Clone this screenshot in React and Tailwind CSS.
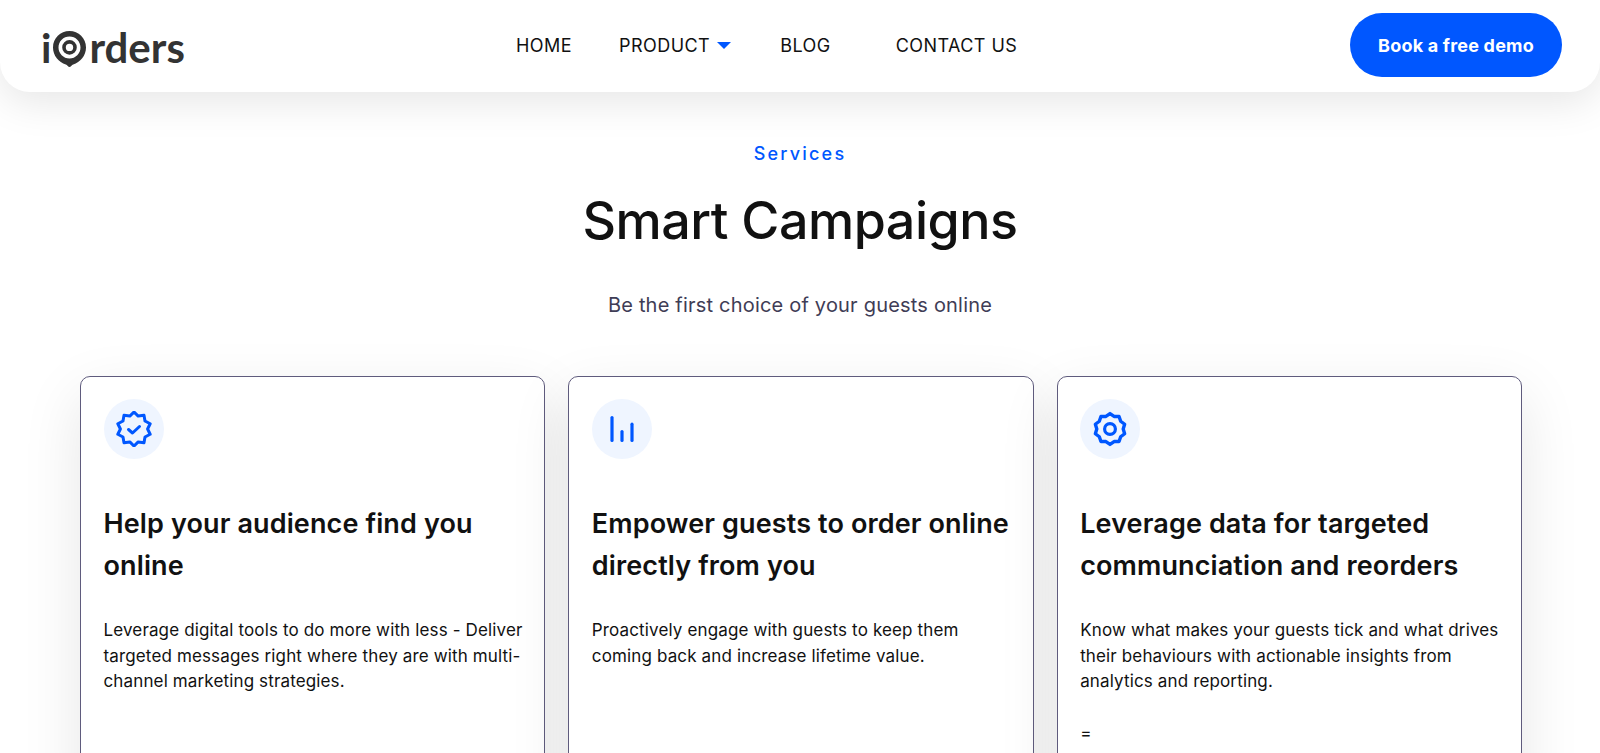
import React from "react";

const cards = [
  {
    icon: "badge",
    title: "Help your audience find you online",
    body: "Leverage digital tools to do more with less - Deliver targeted messages right where they are with multi-channel marketing strategies.",
  },
  {
    icon: "bars",
    title: "Empower guests to order online directly from you",
    body: "Proactively engage with guests to keep them coming back and increase lifetime value.",
  },
  {
    icon: "gear",
    title: "Leverage data for targeted communciation and reorders",
    body: "Know what makes your guests tick and what drives their behaviours with actionable insights from analytics and reporting.",
    extra: "=",
  },
];

// scalloped outline used by the badge and the gear
const ringPath = (points, outer, inner) => {
  let d = "";
  for (let i = 0; i < points * 2; i++) {
    const r = i % 2 === 0 ? outer : inner;
    const a = (Math.PI * i) / points - Math.PI / 2;
    d += `${i === 0 ? "M" : "L"}${(18 + r * Math.cos(a)).toFixed(2)} ${(18 + r * Math.sin(a)).toFixed(2)}`;
  }
  return d + "Z";
};

const BadgeIcon = () => (
  <svg width="36" height="36" viewBox="0 0 36 36" fill="none" stroke="#0057ff" strokeWidth="3" strokeLinejoin="round" strokeLinecap="round">
    <path d={ringPath(10, 17, 13.6)} />
    <path d="M12.500 18.500l4 3.500 7-6.500" />
  </svg>
);

const BarsIcon = () => (
  <svg width="36" height="36" viewBox="0 0 36 36" fill="none" stroke="#0057ff" strokeWidth="3.2" strokeLinecap="round">
    <path d="M8 6.500V29.500" />
    <path d="M18 20.500V29.500" />
    <path d="M28 13.200V29.500" />
  </svg>
);

const GearIcon = () => (
  <svg width="36" height="36" viewBox="0 0 36 36" fill="none" stroke="#0057ff" strokeWidth="3.2" strokeLinejoin="round">
    <path d={ringPath(10, 15.4, 13.2)} strokeWidth="3.400" />
    <circle cx="18" cy="18" r="5.400" />
  </svg>
);

const icons = { badge: BadgeIcon, bars: BarsIcon, gear: GearIcon };

const LogoPin = () => (
  <svg width="33" height="36" viewBox="0 0 33 36" className="shrink-0">
    <path
      fillRule="evenodd"
      fill="#333333"
      d="M16.500 0C7.400 0 0 7.300 0 16.400c0 8.200 5.800 14.800 12.800 17.100 1.500.5 2.500 2.500 3.700 2.500s2.200-2 3.700-2.500C27.200 31.200 33 24.600 33 16.400 33 7.300 25.600 0 16.500 0zm0 5.500c6.100 0 11 4.900 11 10.900s-4.900 11-11 11-11-5-11-11 4.900-10.900 11-10.900z"
    />
    <circle cx="16.500" cy="16.400" r="5.500" fill="none" stroke="#333333" strokeWidth="3.600" />
  </svg>
);

const Logo = () => (
  <div className="w-[475px] flex items-end text-[#333333] font-['Lato',sans-serif] leading-none">
    <span className="text-[41px] font-bold mr-[2px] -mb-[1px]">i</span>
    <LogoPin />
    <span className="text-[42px] font-bold ml-[3px] -mb-[1px]">rders</span>
  </div>
);

const Nav = () => (
  <nav className="flex items-center text-[18px] text-[#111111] tracking-[0.45px] mb-[2px]">
    <a className="mr-[47px]">HOME</a>
    <a className="flex items-center mr-[49px]">
      PRODUCT
      <span className="ml-[7px] mt-[1px] w-0 h-0 border-l-[7px] border-r-[7px] border-t-[7px] border-l-transparent border-r-transparent border-t-[#0057ff]" />
    </a>
    <a className="mr-[65px]">BLOG</a>
    <a>CONTACT US</a>
  </nav>
);

const Card = ({ card }) => {
  const Icon = icons[card.icon];
  return (
    <div className="bg-white border border-[#5f5b7d] rounded-[10px] pt-[22px] pl-[22.5px] pr-[17px] h-[420px] shadow-[0_20px_60px_rgba(0,0,0,0.1)]">
      <div className="w-[60px] h-[60px] rounded-full bg-[#eff5ff] flex items-center justify-center">
        <Icon />
      </div>
      <h3 className="mt-[44px] text-[27px] leading-[42px] font-semibold tracking-[0.12px] text-[#111111]">{card.title}</h3>
      <div className="mt-[31px] text-[17px] leading-[25.5px] tracking-[0.14px] text-[#111111]">
        <p>{card.body}</p>
        {card.extra && <p className="mt-[26px]">{card.extra}</p>}
      </div>
    </div>
  );
};

export default function App() {
  return (
    <div className="h-[753px] overflow-hidden bg-white font-['Inter',sans-serif]">
      <header className="relative z-10 h-[92px] bg-white rounded-b-[30px] shadow-[0_10px_40px_rgba(0,0,0,0.1)] flex items-center pl-[41px] pr-[38px]">
        <Logo />
        <Nav />
        <button className="ml-auto mb-[2px] w-[212px] h-[64px] rounded-full bg-[#0057ff] text-white text-[18px] font-bold tracking-[0.2px]">Book a free demo</button>
      </header>
      <section className="flex flex-col items-center pt-[52px]">
        <div className="text-[#0057ff] text-[18px] font-medium tracking-[2.2px] leading-[20px]">Services</div>
        <h1 className="mt-[26px] text-[52px] leading-[62px] font-medium tracking-[-0.5px] text-[#111111]">Smart Campaigns</h1>
        <p className="mt-[39px] text-[20px] leading-[28px] tracking-[0.2px] text-[#3f3d56]">Be the first choice of your guests online</p>
      </section>
      <section className="mt-[57px] pl-[80px] pr-[78px] grid grid-cols-3 gap-[23px]">
        {cards.map((c) => (
          <Card key={c.icon} card={c} />
        ))}
      </section>
    </div>
  );
}
